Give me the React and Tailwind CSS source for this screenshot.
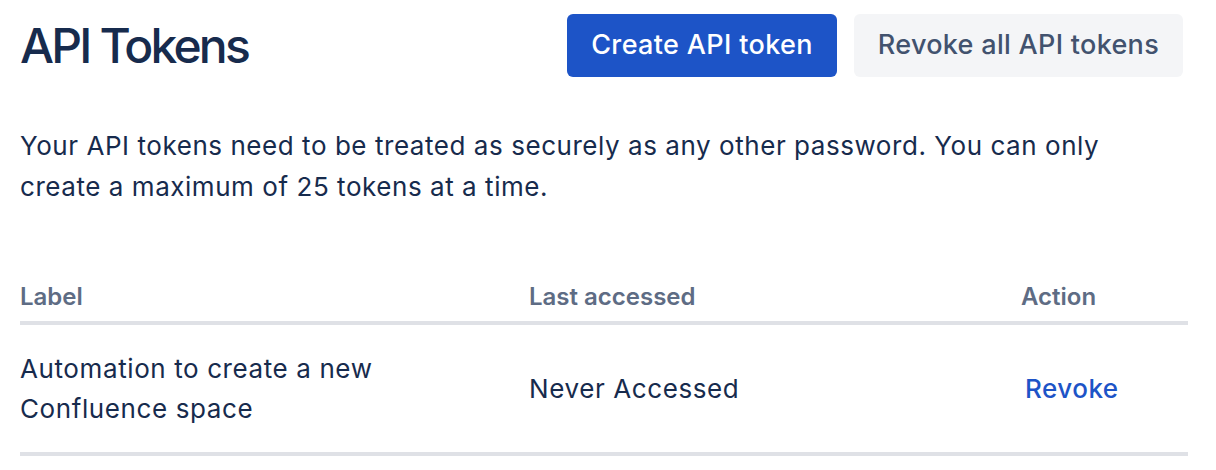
export default function App() {
  return (
    <div
      className="w-[1216px] h-[470px] bg-white overflow-hidden text-[#172b4d]"
      style={{ fontFamily: "Inter, 'Noto Sans', sans-serif" }}
    >
      <div className="pl-[20px] pr-[33px] pt-[14px]">
        <div className="flex items-center justify-between">
          <h1 className="text-[48px] font-medium leading-[56px] tracking-[-2.8px] text-[#172b4d]">
            API Tokens
          </h1>
          <div className="flex gap-[17px]">
            <button className="h-[63px] px-[24px] rounded-[6px] bg-[#1d54c7] text-white text-[27px] tracking-[0.35px] font-medium">
              Create API token
            </button>
            <button className="h-[63px] px-[24px] rounded-[6px] bg-[#f4f5f7] text-[#42526e] text-[27px] tracking-[0.3px] font-medium">
              Revoke all API tokens
            </button>
          </div>
        </div>
      </div>

      <p className="mt-[48px] pl-[20px] text-[26px] leading-[41px] tracking-[0.55px] w-[1120px]">
        Your API tokens need to be treated as securely as any other password. You can only create a maximum of 25 tokens at a time.
      </p>

      <div className="mt-[74px] ml-[20px] w-[1168px]">
        <div className="flex text-[24px] leading-[32px] font-semibold text-[#5e6c84] pb-[8px] border-b-[4px] border-[#dfe1e6]">
          <div className="w-[509px]">Label</div>
          <div className="w-[492px]">Last accessed</div>
          <div className="flex-1">Action</div>
        </div>
        <div className="flex items-center h-[131px] text-[26px] leading-[40px] tracking-[0.6px] border-b-[4px] border-[#dfe1e6]">
          <div className="w-[509px]">
            <div className="max-w-[420px]">Automation to create a new Confluence space</div>
          </div>
          <div className="w-[492px]">Never Accessed</div>
          <div className="flex-1 pl-[4px]">
            <span className="text-[#1d54c7] font-medium tracking-[0.5px]">Revoke</span>
          </div>
        </div>
      </div>
    </div>
  );
}
